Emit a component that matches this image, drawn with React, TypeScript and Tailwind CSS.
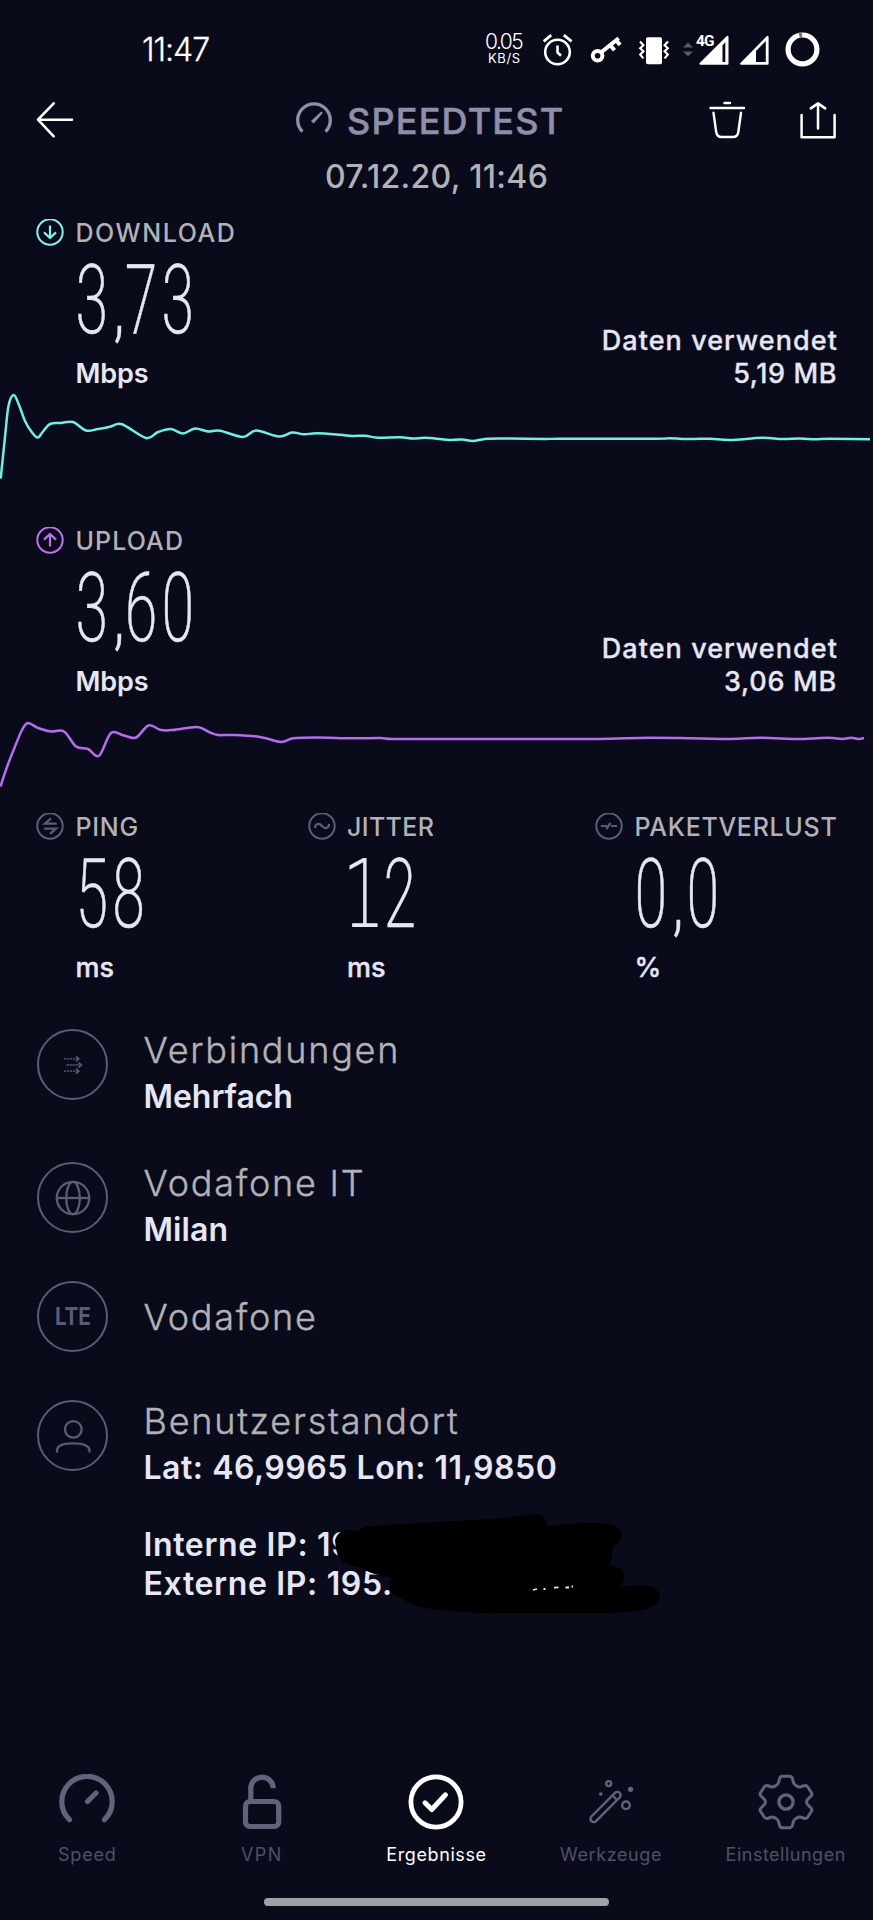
import type { ReactNode } from "react";

type Point = [number, number];

const DOWNLOAD: Point[] = [
  [0.7, 478.5], [5, 437], [8.5, 406], [13.7, 395], [19, 405], [25, 421], [31, 431], [37.5, 437.5], [43, 431.5], [50, 424], [61, 423],
  [73, 422], [86, 430.5], [98, 429], [110, 426.8], [122, 424.3], [146, 438], [158, 432], [171, 429],
  [183, 433.5], [195, 428.5], [208, 431.5], [220, 430.7], [243, 437], [256, 430.5], [279, 436.5], [292, 432.5],
  [304, 434.3], [317, 433.3], [340, 434.8], [352, 436], [365, 435.7], [378, 437.8], [400, 437.3], [413, 438.5],
  [425, 437.8], [440, 439], [449, 440], [462, 439.5], [473, 441], [487, 438.7], [510, 438.5], [545, 439],
  [560, 438.7], [655, 438.7], [670, 438.3], [690, 439], [710, 438.7], [730, 440], [762, 437.8], [782, 439],
  [800, 438.5], [815, 439.3], [830, 438.8], [870, 439.2],
];

const UPLOAD: Point[] = [
  [0.5, 786.5], [7, 767], [14, 749], [22, 730], [28, 723], [38, 728], [51, 731.5], [64, 731.5], [76, 746.5], [88, 749], [99, 755.7],
  [111, 733], [124, 735.5], [136, 737.5], [148.5, 725.5], [161, 730], [173, 730], [197, 727], [209, 732],
  [218, 735], [232, 735], [260, 737], [281, 742], [293, 738.3], [317, 737.5], [352, 738.3], [380, 738],
  [393, 739], [440, 739], [590, 739], [640, 737.9], [680, 738.1], [730, 739], [760, 737.8], [800, 739],
  [828, 737.8], [842, 739], [851, 737.8], [859, 739], [864, 738],
];

function smooth(points: Point[]) {
  let d = `M${points[0][0]} ${points[0][1]}`;
  for (let i = 0; i < points.length - 1; i++) {
    const a = points[Math.max(0, i - 1)];
    const b = points[i];
    const c = points[i + 1];
    const e = points[Math.min(points.length - 1, i + 2)];
    d += ` C${b[0] + (c[0] - a[0]) / 6} ${b[1] + (c[1] - a[1]) / 6} ${c[0] - (e[0] - b[0]) / 6} ${c[1] - (e[1] - b[1]) / 6} ${c[0]} ${c[1]}`;
  }
  return d;
}

function StatusBar() {
  return (
    <div className="flex h-[85px] shrink-0 items-center pt-[14px] text-white">
      <span className="ml-[142px] w-[343px] text-[32px] leading-none font-light tracking-[-1.05px] [-webkit-text-stroke:0.3px]">11:47</span>
      <div className="flex w-[57px] flex-col">
        <span className="text-[21px] leading-[16px] font-light tracking-[-1.5px]">0.05</span>
        <span className="ml-[3px] text-[13px] leading-[16px] tracking-[0.6px]">KB/S</span>
      </div>
      <svg className="h-[34px] w-[32px]" viewBox="0 0 32 34" fill="none" stroke="currentColor" strokeWidth="2.6">
        <circle cx="15.5" cy="19" r="12.3" />
        <path d="M1.7 8.3 9.2 2.2M21.8 2.2 29.6 8.3" strokeWidth="2.8" />
        <path d="M15.5 12.5V19.5L19 22.8" />
      </svg>
      <svg className="ml-[16px] h-[34px] w-[32px]" viewBox="0 0 32 34" fill="none" stroke="currentColor">
        <circle cx="7.6" cy="22.8" r="4.8" strokeWidth="4" />
        <path d="M11 19.5 28.6 5.2M20.5 12.5 24.5 17.2M26 7.5 30.2 11.8" strokeWidth="4" />
      </svg>
      <svg className="ml-[16px] h-[34px] w-[32px]" viewBox="0 0 32 34" fill="none" stroke="currentColor" strokeWidth="2.2">
        <rect x="8" y="4.3" width="16" height="27" rx="1.8" fill="currentColor" stroke="none" />
        <path d="M2 8.500 5.400 12.200 2.200 15.200 5.400 18.200 2.200 21.600 5.400 25.400M30 8.500 26.600 12.200 29.800 15.200 26.600 18.200 29.800 21.600 26.600 25.400" />
      </svg>
      <svg className="ml-[12px] h-[34px] w-[12px]" viewBox="0 0 12 34" fill="#5a5b6a">
        <path d="M1 14.5 6 9.5 11 14.5ZM1 18.5H11L6 23.5Z" />
      </svg>
      <div className="relative ml-[3px] h-[34px] w-[32px]">
        <svg className="h-[34px] w-[32px]" viewBox="0 0 32 34">
          <path d="M3.5 30.7 30.4 4V30.7Z" fill="#ffffff" stroke="#ffffff" strokeWidth="2.2" strokeLinejoin="round" />
          <path d="M25.5 12.5 28.3 9V29H25.5Z" fill="#0a0b1a" />
        </svg>
        <span className="absolute top-[1px] -left-[1px] text-[15.5px] leading-[14px] font-bold tracking-[-0.8px] [font-family:Roboto,sans-serif] [text-shadow:1px_1px_0_#0a0b1a]">4G</span>
      </div>
      <svg className="ml-[7px] h-[34px] w-[34px]" viewBox="0 0 34 34">
        <path d="M5.2 30.7 31.5 4V30.7Z" fill="#ffffff" stroke="#ffffff" strokeWidth="2.2" strokeLinejoin="round" />
        <path d="M20 18 29.8 8V29H20Z" fill="#0a0b1a" />
      </svg>
      <svg className="ml-[15px] h-[36px] w-[36px]" viewBox="0 0 36 36" fill="none" strokeWidth="5.2">
        <circle cx="17.5" cy="17.4" r="14.4" stroke="#ffffff" />
        <path d="M14.2 3.4A14.4 14.4 0 0 1 17.2 3" stroke="#77787f" />
      </svg>
    </div>
  );
}

function Header() {
  return (
    <header className="flex h-[70px] shrink-0 items-center pl-[36px]">
      <svg className="h-[38px] w-[38px] text-white" viewBox="0 0 38 38" fill="none" stroke="currentColor" strokeWidth="2.6" strokeLinecap="round" strokeLinejoin="round">
        <path d="M2 18.7H36M17.7 2.3 2 18.7 17.7 35.3" />
      </svg>
      <svg className="ml-[222px] h-[36px] w-[36px] text-[#8f8faa]" viewBox="0 0 36 36" fill="none" stroke="currentColor" strokeWidth="3.3">
        <path d="M6.4 29.6A16.3 16.3 0 1 1 29.6 29.6" />
        <path d="M15 19 25.3 9.4 26.8 11 17.6 21.6Z" fill="currentColor" stroke="none" />
      </svg>
      <h1 className="ml-[15px] w-[362px] pt-[1px] text-[36px] leading-none font-medium tracking-[1.2px] text-[#8f8faa] [-webkit-text-stroke:0.5px]">SPEEDTEST</h1>
      <svg className="h-[38px] w-[37px] text-white" viewBox="0 0 37 38" fill="none" stroke="currentColor" strokeWidth="2.4" strokeLinecap="round" strokeLinejoin="round">
        <path d="M1.5 7H35M15.5 2H21M4.5 11.8 7.2 31Q8 36 12.5 36H24Q28.6 36 29.3 31L32 11.8" />
      </svg>
      <svg className="ml-[54px] h-[38px] w-[37px] text-white" viewBox="0 0 37 38" fill="none" stroke="currentColor" strokeWidth="2.5" strokeLinecap="round" strokeLinejoin="round">
        <path d="M1.6 14V36.2H34.6V14M18 27.5V2.8M10.8 7.4 18 2.4 25.2 7.4" />
      </svg>
    </header>
  );
}

function StatLabel({ icon, children, className }: { icon: ReactNode; children: ReactNode; className: string }) {
  return (
    <div className="flex h-[70px] items-center">
      <svg className="h-[28px] w-[28px] shrink-0" viewBox="0 0 28 28" fill="none" stroke="currentColor" strokeWidth="2">
        {icon}
      </svg>
      <span className={`ml-[11.5px] whitespace-nowrap text-[25px] leading-[30px] font-medium text-[#b2b2b6] ${className}`}>{children}</span>
    </div>
  );
}

function Digits({ children }: { children: string }) {
  return (
    <div className="flex h-[63px] origin-left translate-y-[1px] scale-x-[0.715] items-baseline text-[97px] leading-[63px] font-extralight tracking-[4.3px] [font-family:Roboto,sans-serif] [font-stretch:75%] [-webkit-text-stroke:0.6px]">
      {children.split("").map((c, i) =>
        c === "," ? (
          <span key={i} className="w-[21.5px] pl-[3px] text-[76px] font-light tracking-normal">,</span>
        ) : (
          <span key={i}>{c}</span>
        ),
      )}
    </div>
  );
}

function Speed({ icon, label, labelClass, value, used, usedClass }: { icon: ReactNode; label: string; labelClass: string; value: string; used: string; usedClass: string }) {
  return (
    <section className="shrink-0 px-[36px]">
      <StatLabel icon={icon} className={labelClass}>{label}</StatLabel>
      <div className="flex h-[122px] justify-between pl-[39px] text-[#e6e6f5]">
        <div className="flex w-[130px] flex-col justify-between">
          <Digits>{value}</Digits>
          <span className="pl-[0.5px] text-[27px] leading-[33px] font-semibold tracking-[-0.1px]">Mbps</span>
        </div>
        <div className="flex flex-col items-end justify-end text-[27px] leading-[33px] font-medium [-webkit-text-stroke:0.3px]">
          <span className="-mr-[1px] tracking-[1.06px]">Daten verwendet</span>
          <span className={usedClass}>{used}</span>
        </div>
      </div>
    </section>
  );
}

function Metric({ icon, label, labelClass, unit, children, className }: { icon: ReactNode; label: string; labelClass: string; unit: string; children: ReactNode; className: string }) {
  return (
    <div className={`text-[#5b5c74] ${className}`}>
      <StatLabel icon={icon} className={labelClass}>{label}</StatLabel>
      <div className="flex h-[122px] flex-col justify-between pl-[39px] text-[#e6e6f5]">
        {children}
        <span className="pl-[0.5px] text-[27px] leading-[33px] font-medium [-webkit-text-stroke:0.4px]">{unit}</span>
      </div>
    </div>
  );
}

function Detail({ icon, title, sub, subClass, className }: { icon: ReactNode; title: string; sub?: string; subClass?: string; className: string }) {
  return (
    <div className={`flex pl-[37px] ${className}`}>
      <div className="flex h-[71px] w-[71px] shrink-0 items-center justify-center rounded-full border-2 border-[#5b5c74] text-[#5b5c74]">{icon}</div>
      <div className="ml-[35.5px] flex flex-col">
        <span className="pt-px text-[36px] leading-[41px] font-light tracking-[1.75px] text-[#b2b2b6] [-webkit-text-stroke:0.4px]">{title}</span>
        {sub && <span className={`text-[32px] leading-[51px] font-semibold text-[#e6e6f5] ${subClass}`}>{sub}</span>}
      </div>
    </div>
  );
}

function NavItem({ label, active, labelClass, children }: { label: string; active?: boolean; labelClass: string; children: ReactNode }) {
  return (
    <div className={`flex w-1/5 flex-col items-center ${active ? "text-white" : "text-[#62637a]"}`}>
      <svg className="h-[56px] w-[56px]" viewBox="0 0 56 56" fill="none" stroke="currentColor" strokeLinecap="round" strokeLinejoin="round">
        {children}
      </svg>
      <span className={`mt-[16px] text-[18px] leading-[18px] whitespace-nowrap ${active ? "" : "text-[#4f5066]"} ${labelClass}`}>{label}</span>
    </div>
  );
}

export default function App() {
  return (
    <main className="flex h-[1920px] w-[873px] flex-col overflow-hidden bg-[#0a0b1a] [font-family:Inter,sans-serif]">
      <StatusBar />
      <Header />
      <p className="h-[43px] shrink-0 text-center text-[32px] leading-[43px] font-medium tracking-[0.3px] text-[#b2b2b6]">07.12.20, 11:46</p>

      <Speed
        icon={
          <g stroke="#7df5ec">
            <circle cx="14" cy="13" r="12.7" />
            <path d="M14 6.5V19M8 13.4 14 19 20 13.4" strokeWidth="2.2" />
          </g>
        }
        label="DOWNLOAD"
        labelClass="tracking-[1.55px]"
        value="3,73"
        used="5,19 MB"
        usedClass="tracking-[0.6px]"
      />
      <svg className="h-[116px] w-full shrink-0 overflow-visible" viewBox="0 390 873 116" fill="none">
        <path d={smooth(DOWNLOAD)} stroke="#70efe5" strokeWidth="2.5" />
      </svg>

      <Speed
        icon={
          <g stroke="#bd72f3">
            <circle cx="14" cy="13" r="12.7" />
            <path d="M14 19.5V7M8 12.6 14 7 20 12.6" strokeWidth="2.2" />
          </g>
        }
        label="UPLOAD"
        labelClass="tracking-[1.1px]"
        value="3,60"
        used="3,06 MB"
        usedClass="tracking-[0.75px]"
      />
      <svg className="h-[94px] w-full shrink-0 overflow-visible" viewBox="0 698 873 94" fill="none">
        <path d={smooth(UPLOAD)} stroke="#b56df0" strokeWidth="2.5" />
      </svg>

      <section className="flex shrink-0 pl-[36px]">
        <Metric
          className="w-[271.5px]"
          icon={
            <>
              <circle cx="14" cy="13" r="12.7" />
              <path d="M20.8 10.6H9L15 5.4M8.2 15.6H20L14 20.8" strokeWidth="2.3" />
            </>
          }
          label="PING"
          labelClass="tracking-[0.75px]"
          unit="ms"
        >
          <Digits>58</Digits>
        </Metric>
        <Metric
          className="w-[287.5px]"
          icon={
            <>
              <circle cx="14" cy="13" r="12.7" />
              <path d="M6.8 15C7.5 10.5 11 9.6 14 13C17 16.4 20.5 15.5 21.2 11" strokeWidth="2.2" />
            </>
          }
          label="JITTER"
          labelClass="tracking-[0.35px]"
          unit="ms"
        >
          <div className="flex h-[63px]">
            <span className="-ml-[5px] w-[41px] origin-left translate-y-[1px] scale-x-[0.72] text-[95px] leading-[62px] font-extralight [font-family:'DejaVu_Sans',sans-serif]">1</span>
            <Digits>2</Digits>
          </div>
        </Metric>
        <Metric
          className=""
          icon={
            <>
              <circle cx="14" cy="13" r="12.7" />
              <path d="M6 13H12M11.4 16.2 15.4 9.8M16 13H22" strokeWidth="2.2" />
            </>
          }
          label="PAKETVERLUST"
          labelClass="tracking-[0.7px]"
          unit="%"
        >
          <Digits>0,0</Digits>
        </Metric>
      </section>

      <section className="shrink-0 pt-[45px]">
        <Detail
          className="h-[133px]"
          title="Verbindungen"
          sub="Mehrfach"
          subClass="tracking-[-0.05px]"
          icon={
            <svg className="h-[20px] w-[20px]" viewBox="0 0 20 20" fill="none" stroke="currentColor" strokeWidth="1.3">
              <path d="M1 3.8H15M3.5 10H18M1 16.2H15" strokeDasharray="2.2 0.8" />
              <path d="M13 1.3 15.8 3.8 13 6.3M15.5 7.5 18.3 10 15.5 12.5M13 13.7 15.8 16.2 13 18.7" strokeWidth="1.6" />
            </svg>
          }
        />
        <Detail
          className="h-[119px]"
          title="Vodafone IT"
          sub="Milan"
          subClass="tracking-[0.1px]"
          icon={
            <svg className="h-[36px] w-[36px]" viewBox="0 0 36 36" fill="none" stroke="currentColor" strokeWidth="2.3">
              <circle cx="18" cy="18" r="16.2" />
              <ellipse cx="18" cy="18" rx="6.8" ry="16.2" />
              <path d="M2 18H34" />
            </svg>
          }
        />
        <Detail
          className="h-[119px] [&>div:last-child]:pt-[15px]"
          title="Vodafone"
          icon={<span className="scale-x-[0.86] text-[24px] leading-none font-bold tracking-[-0.2px]">LTE</span>}
        />
        <div className="relative">
          <Detail
            className=""
            title="Benutzerstandort"
            sub="Lat: 46,9965 Lon: 11,9850"
            subClass="tracking-[0.52px]"
            icon={
              <svg className="h-[36px] w-[36px]" viewBox="0 0 36 36" fill="none" stroke="currentColor" strokeWidth="2.3">
                <circle cx="18.3" cy="11.4" r="8.3" />
                <path d="M2 34.5V32Q2.5 25.3 18 25.3Q33.5 25.3 34.5 32V34.5" />
              </svg>
            }
          />
          <div className="mt-[33px] ml-[143.5px] flex flex-col text-[32px] leading-[38.5px] font-semibold tracking-[0.65px] text-[#e6e6f5]">
            <span>Interne IP: 19</span>
            <span>Externe IP: 195.</span>
          </div>
          <svg className="absolute top-[109px] left-[330px] h-[110px] w-[335px]" viewBox="330 1510 335 110" fill="none">
            <path
              d="M335 1541Q338 1532 346 1531L358 1532Q362 1528 368 1527L420 1524 490 1520Q518 1518 535 1514.5Q545 1515 547 1527Q590 1522 608 1525Q621 1527 622.5 1536Q622 1543 613 1547Q614 1558 608 1566.500Q622 1567 625 1577Q624 1585 618 1588L645 1586Q658 1587 660 1597Q660 1603 650 1609Q640 1614 590 1614L500 1614Q470 1615 425 1609Q408 1606 402 1599L392 1595Q388 1586 392 1578Q370 1576 363 1569L350 1566Q338 1563 336 1550Z"
              fill="#000000"
            />
            <path d="M533 1591 537 1590M543.500 1590H545.500M554 1588.700 558.500 1588.300M565.500 1588.500H569M571.500 1587.500H573" stroke="#e6e6f5" strokeWidth="1.8" />
          </svg>
        </div>
      </section>

      <nav className="mt-auto flex h-[90px] shrink-0">
        <NavItem label="Speed" labelClass="tracking-[0.8px]">
          <path d="M10.500 45.700A25.200 25.200 0 1 1 45.500 45.700M28.500 27.500 37 19" strokeWidth="5.2" />
        </NavItem>
        <NavItem label="VPN" labelClass="tracking-[1.5px]">
          <path d="M16.800 27V14.300A11.200 11.200 0 0 1 39.200 14.300" strokeWidth="5.200" strokeLinecap="butt" />
          <rect x="11.500" y="27.500" width="33.200" height="25" rx="4.500" strokeWidth="5.2" />
        </NavItem>
        <NavItem label="Ergebnisse" labelClass="tracking-[0.6px]" active>
          <circle cx="28" cy="28" r="25.100" strokeWidth="4.800" />
          <path d="M17 28.800 23.800 35.500 37.500 20.800" strokeWidth="5" />
        </NavItem>
        <NavItem label="Werkzeuge" labelClass="tracking-[0.6px]">
          <g strokeWidth="2.400">
            <rect x="-20" y="-3.300" width="40" height="6.600" rx="3.300" transform="translate(22.500 33) rotate(-45)" />
            <path d="M29.500 21.500 34 26" strokeWidth="1.900" />
            <circle cx="25.700" cy="9.600" r="2.500" />
            <circle cx="43" cy="31.300" r="3.800" />
          </g>
          <circle cx="17.800" cy="20" r="1.800" fill="currentColor" stroke="none" />
          <circle cx="47.500" cy="15.300" r="2.600" fill="currentColor" stroke="none" />
        </NavItem>
        <NavItem label="Einstellungen" labelClass="tracking-[0.5px]">
          <path
            d="M24.500 2.300H31.500Q33.700 2.300 34.300 4.300L35.500 8.500Q36 10.500 38 11.500L39.500 12.400Q41 13.300 43 12.700L46 11.800Q48.500 11 49.800 13L53.500 18.700Q54.500 20.500 53 22L50 25Q48.500 26.300 48.500 28Q48.500 29.700 50 31L53 34Q54.500 35.500 53.500 37.300L49.800 43Q48.500 45 46 44.200L43 43.300Q41 42.700 39.500 43.600L38 44.500Q36 45.500 35.500 47.500L34.300 51.700Q33.700 53.700 31.500 53.700H24.500Q22.300 53.700 21.700 51.700L20.500 47.500Q20 45.500 18 44.500L16.500 43.600Q15 42.700 13 43.300L10 44.200Q7.500 45 6.200 43L2.500 37.300Q1.500 35.500 3 34L6 31Q7.500 29.700 7.500 28Q7.500 26.300 6 25L3 22Q1.500 20.500 2.500 18.700L6.200 13Q7.500 11 10 11.800L13 12.700Q15 13.300 16.500 12.400L18 11.500Q20 10.500 20.500 8.500L21.700 4.300Q22.300 2.300 24.500 2.300Z"
            strokeWidth="3"
          />
          <circle cx="28" cy="28" r="7.100" strokeWidth="3.300" />
        </NavItem>
      </nav>
      <div className="mt-[34px] mb-[14px] ml-[264px] h-[8px] w-[345px] shrink-0 rounded-full bg-[#a0a0a5]" />
    </main>
  );
}
